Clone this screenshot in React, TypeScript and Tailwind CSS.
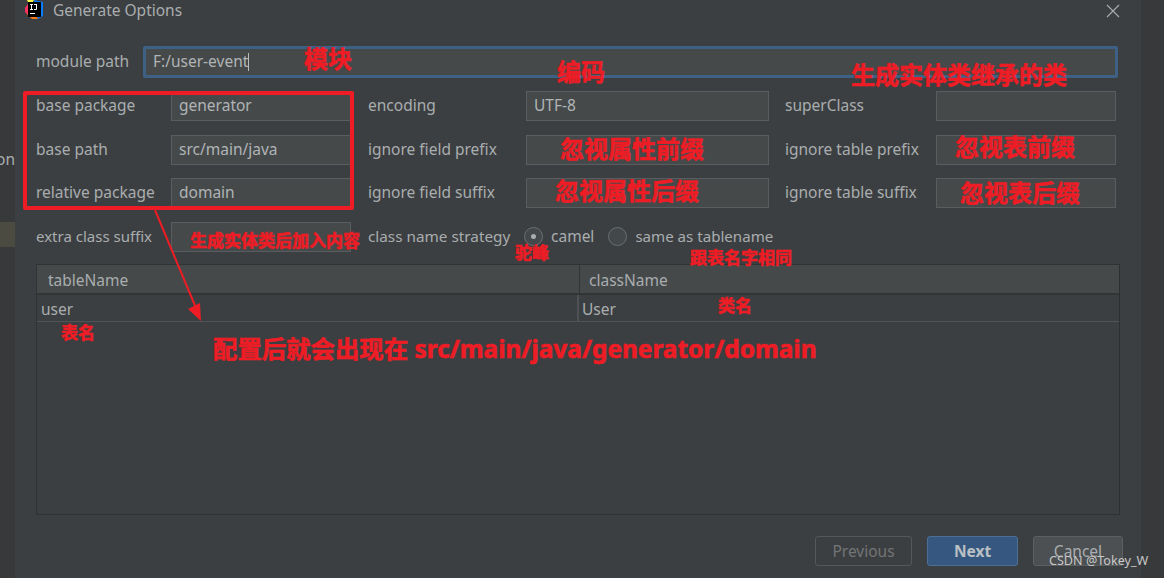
import React from 'react';

const inputCls = 'h-[30px] bg-[#45494a] border border-[#5a5d5f] px-[7px] text-[15.5px] leading-[26px] text-[#b0b4b6]';
const labelCls = 'text-[15.5px] leading-[28px] text-[#a9adaf] whitespace-nowrap';
const red = 'absolute text-[#ee1c25] font-bold whitespace-nowrap [-webkit-text-stroke:0.6px_#ee1c25]';

const rows = [
  ['base package', 'generator', 'encoding', 'UTF-8', 'superClass', ''],
  ['base path', 'src/main/java', 'ignore field prefix', '', 'ignore table prefix', ''],
  ['relative package', 'domain', 'ignore field suffix', '', 'ignore table suffix', ''],
];

const notes = [
  { text: '模块', cls: 'left-[304px] top-[43px] text-[24px] leading-[32px]' },
  { text: '编码', cls: 'left-[557px] top-[56px] text-[24px] leading-[32px]' },
  { text: '生成实体类继承的类', cls: 'left-[851px] top-[59px] text-[24px] leading-[32px]' },
  { text: '忽视属性前缀', cls: 'left-[560px] top-[133px] text-[24px] leading-[32px]' },
  { text: '忽视表前缀', cls: 'left-[955px] top-[131px] text-[24px] leading-[32px]' },
  { text: '忽视属性后缀', cls: 'left-[555px] top-[175px] text-[24px] leading-[32px]' },
  { text: '忽视表后缀', cls: 'left-[960px] top-[177px] text-[24px] leading-[32px]' },
  { text: '生成实体类后加入内容', cls: 'left-[190px] top-[231px] text-[17px] leading-[20px]' },
  { text: '驼峰', cls: 'left-[515px] top-[243px] text-[17px] leading-[20px]' },
  { text: '跟表名字相同', cls: 'left-[690px] top-[248px] text-[17px] leading-[20px]' },
  { text: '类名', cls: 'left-[718px] top-[296px] text-[17px] leading-[20px]' },
  { text: '表名', cls: 'left-[61px] top-[323px] text-[17px] leading-[20px]' },
  { text: '配置后就会出现在 src/main/java/generator/domain', cls: 'left-[213px] top-[333px] text-[24.4px] leading-[32px]' },
];

const App: React.FC = () => {
  return (
    <div className="relative h-[578px] w-[1164px] overflow-hidden bg-[#37393b] flex" style={{ fontFamily: '"Noto Sans", "Noto Sans CJK SC", sans-serif' }}>
      {/* IDE behind the dialog */}
      <div className="w-[15px] shrink-0 flex flex-col overflow-hidden">
        <div className="mt-[147px] flex justify-end text-[15.5px] leading-[24px] text-[#a9adaf] whitespace-nowrap">on</div>
        <div className="mt-[51px] h-[25px] bg-[#4b4b42]" />
      </div>

      {/* Dialog */}
      <div className="w-[1126px] shrink-0 h-full bg-[#3c3f41] flex flex-col">
        <div className="h-[22px] flex items-center pl-[9px] pr-[21px]">
          <svg width="20" height="20" viewBox="0 0 20 20" className="shrink-0 -mt-[2px]">
            <path d="M1 8 L6 1 L10 3 L4 15 L1 12 Z" fill="#fe315d" />
            <path d="M10 0 L19 2 L19 16 L14 19 L10 10 Z" fill="#087cfa" />
            <path d="M3 14 L8 19 L14 19 L8 10 Z" fill="#f97a12" />
            <path d="M3 0 L10 0 L6 6 Z" fill="#fcf84a" />
            <rect x="4" y="2" width="13" height="15" fill="#000" />
            <rect x="6" y="13" width="5" height="1" fill="#fff" />
            <path d="M6 4h3v1h-1v4h1v1h-3v-1h1v-4h-1z M10 4h3v5q0 1-1 1h-2v-1h2v-4h-2z" fill="#fff" />
          </svg>
          <span className="ml-[9px] text-[15.5px] leading-[20px] -mt-[2px] text-[#a9adaf]">Generate Options</span>
          <svg width="14" height="14" viewBox="0 0 14 14" className="ml-auto shrink-0">
            <path d="M1 1 L13 13 M13 1 L1 13" stroke="#a9adaf" strokeWidth="1.1" fill="none" />
          </svg>
        </div>

        <div className="pl-[21px] pr-[25px] flex flex-col">
          {/* module path */}
          <div className="mt-[24px] flex items-center h-[32px] -mr-[2px]">
            <span className={`${labelCls} w-[107px] shrink-0 -mt-[2px]`}>module path</span>
            <div className="flex-1 h-[32px] bg-[#45494a] border-[3px] border-[#3d6185] rounded-[2px] pl-[7px] text-[15.5px] text-[#b0b4b6] flex items-center">
              F:/user-event<span className="inline-block w-px h-[18px] bg-[#bbbbbb]" />
            </div>
          </div>

          {/* option rows */}
          <div className="mt-[13px] flex flex-col gap-[13.5px]">
            {rows.map((row) => (
              <div key={row[0]} className="grid grid-cols-[135px_180px_17px_158px_243px_16px_151px_180px] h-[30px]">
                <span className={labelCls}>{row[0]}</span>
                <div className={inputCls}>{row[1]}</div>
                <span />
                <span className={labelCls}>{row[2]}</span>
                <div className={inputCls}>{row[3]}</div>
                <span />
                <span className={labelCls}>{row[4]}</span>
                <div className={inputCls}>{row[5]}</div>
              </div>
            ))}
            <div className="flex h-[30px]">
              <span className="w-[135px] shrink-0 text-[15px] leading-[28px] text-[#a9adaf] whitespace-nowrap">extra class suffix</span>
              <div className={`${inputCls} w-[180px] shrink-0`} />
              <span className="ml-[17px] w-[156px] shrink-0 text-[15.3px] leading-[28px] text-[#a9adaf] whitespace-nowrap">class name strategy</span>
              <span className="mt-[5px] w-[19px] h-[19px] rounded-full border border-[#6b6e70] bg-[#43494a] flex items-center justify-center shrink-0">
                <span className="w-[5px] h-[5px] rounded-full bg-[#a9adaf]" />
              </span>
              <span className={`${labelCls} ml-[8px]`}>camel</span>
              <span className="mt-[5px] ml-[14px] w-[19px] h-[19px] rounded-full border border-[#6b6e70] bg-[#43494a] shrink-0" />
              <span className="ml-[8px] text-[15.1px] leading-[28px] text-[#a9adaf] whitespace-nowrap">same as tablename</span>
            </div>
          </div>

          {/* table */}
          <div className="mt-[12.5px] h-[251px] w-[1084px] border border-[#323232] border-r-[#2f2f2f] flex flex-col">
            <div className="h-[30px] flex bg-[#45494a] border-b-2 border-[#323436] text-[15.5px] leading-[31px] text-[#a9adaf]">
              <div className="w-[543px] pl-[11px] border-r border-[#323436]">tableName</div>
              <div className="pl-[9px]">className</div>
            </div>
            <div className="h-[27px] flex border-b border-[#515456] text-[15.5px] leading-[28px] text-[#a9adaf]">
              <div className="w-[542px] pl-[4px] border-r-2 border-[#4e5254]">user</div>
              <div className="pl-[3px]">User</div>
            </div>
          </div>

          {/* buttons */}
          <div className="mt-[21px] flex justify-end gap-[15px] -mr-[7px]">
            <button className="w-[97px] h-[30px] rounded-[3px] border border-[#55585a] text-[15.5px] leading-[26px] pb-[1px] text-[#737577]">Previous</button>
            <button className="w-[91px] h-[30px] rounded-[3px] border border-[#4c7095] bg-[#365880] text-[15.5px] leading-[26px] pb-[1px] font-bold text-[#bbc0c4]">Next</button>
            <button className="w-[90px] h-[30px] rounded-[3px] border border-[#5d6062] bg-[#4c5052] text-[15.5px] leading-[26px] pb-[1px] text-[#a9adaf]">Cancel</button>
          </div>
        </div>
      </div>

      <div className="flex-1 bg-[#37393b]" />

      {/* red annotations pasted over the screenshot */}
      <div className="absolute left-[23px] top-[91px] w-[331px] h-[119px] border-[4px] border-[#ee1c25] rounded-[2px]" />
      <svg className="absolute left-[150px] top-[205px]" width="60" height="120" viewBox="0 0 60 120">
        <path d="M5 5 L46 103" stroke="#ee1c25" strokeWidth="2" fill="none" />
        <path d="M51 116 L38 104 L50 98 Z" fill="#ee1c25" />
      </svg>
      {notes.map((n) => (
        <span key={n.text} className={`${red} ${n.cls}`}>{n.text}</span>
      ))}
      <span className="absolute left-[1049px] top-[552px] text-[12.6px] leading-[17px] text-[#c8c8c8] whitespace-nowrap">CSDN @Tokey_W</span>
    </div>
  );
};

export default App;
